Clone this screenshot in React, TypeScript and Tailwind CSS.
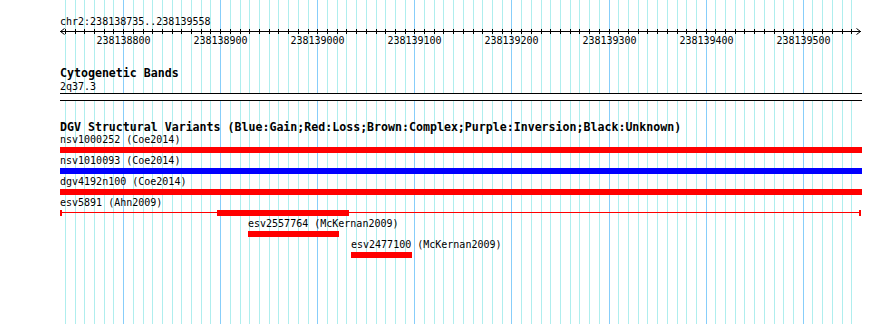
const START = 238138735
const SCALE = 800 / 824

// pixel column of a base position on the page
const px = (bp: number) => Math.round(60 + (bp - START) * SCALE)

const gridTicks: { bp: number; x: number; major: boolean }[] = []
for (let bp = 238138740; bp <= 238139550; bp += 10) {
  gridTicks.push({ bp, x: px(bp), major: bp % 100 === 0 })
}

type Feature = {
  label: string
  x1: number
  x2: number
  color: string
  split?: { x1: number; x2: number }
}

const features: Feature[] = [
  { label: "nsv1000252 (Coe2014)", x1: 60, x2: 862, color: "bg-[#ff0000]" },
  { label: "nsv1010093 (Coe2014)", x1: 60, x2: 862, color: "bg-[#0000ff]" },
  { label: "dgv4192n100 (Coe2014)", x1: 60, x2: 862, color: "bg-[#ff0000]" },
  {
    label: "esv5891 (Ahn2009)",
    x1: 60,
    x2: 862,
    color: "bg-[#ff0000]",
    split: { x1: 217, x2: 349 },
  },
  { label: "esv2557764 (McKernan2009)", x1: 248, x2: 339, color: "bg-[#ff0000]" },
  { label: "esv2477100 (McKernan2009)", x1: 351, x2: 412, color: "bg-[#ff0000]" },
]

const Grid = () => (
  <svg className="absolute inset-0" width={890} height={324} shapeRendering="crispEdges">
    {gridTicks.map((t) => (
      <rect
        key={t.bp}
        x={t.x}
        y={0}
        width={1}
        height={324}
        fill={t.major ? "#87cefa" : "#afeeee"}
      />
    ))}
  </svg>
)

const Ruler = () => (
  <svg width={802} height={18} className="block overflow-visible">
    <rect x={0} y={3} width={801} height={1} fill="#000" shapeRendering="crispEdges" />
    {gridTicks.map((t) => (
      <rect
        key={t.bp}
        x={t.x - 60}
        y={1}
        width={1}
        height={5}
        fill="#000"
        shapeRendering="crispEdges"
      />
    ))}
    <polyline points="4.5,0.5 0.5,3.5 4.5,6.5" fill="none" stroke="#000" strokeWidth={1} />
    <polyline points="796.5,0.5 800.5,3.5 796.5,6.5" fill="none" stroke="#000" strokeWidth={1} />
    {gridTicks
      .filter((t) => t.major)
      .map((t) => (
        <text
          key={t.bp}
          x={t.x - 60 + 0.5}
          y={15.5}
          textAnchor="middle"
          fontSize={10}
          fontFamily="'DejaVu Sans Mono', monospace"
          fill="#000"
        >
          {t.bp}
        </text>
      ))}
  </svg>
)

const FeatureRow = ({ f }: { f: Feature }) => (
  <div className="flex flex-col">
    <div
      className="h-[15px] pt-[1px] leading-[14px] whitespace-pre text-[10px] text-black"
      style={{ marginLeft: f.x1 - 60 }}
    >
      {f.label}
    </div>
    {f.split ? (
      <div className="relative h-[6px] w-[802px]">
        <div className={`absolute left-0 top-[2px] h-px w-[801px] ${f.color}`} />
        <div className={`absolute left-0 top-0 h-[6px] w-[2px] ${f.color}`} />
        <div className={`absolute left-[799px] top-0 h-[6px] w-[2px] ${f.color}`} />
        <div
          className={`absolute top-0 h-[6px] ${f.color}`}
          style={{ left: f.split.x1 - 60, width: f.split.x2 - f.split.x1 }}
        />
      </div>
    ) : (
      <div
        className={`h-[6px] ${f.color}`}
        style={{ marginLeft: f.x1 - 60, width: f.x2 - f.x1 }}
      />
    )}
  </div>
)

const App = () => {
  return (
    <div className="relative w-[890px] h-[324px] overflow-hidden bg-white text-black font-['DejaVu_Sans_Mono',monospace]">
      <Grid />
      <div className="relative flex flex-col pl-[60px] pt-[16px]">
        <div className="h-[12px] leading-[12px] text-[10px]">chr2:238138735..238139558</div>
        <Ruler />

        <div className="mt-[22px] h-[10px] leading-[10px] text-[11.6px] font-bold whitespace-pre">
          Cytogenetic Bands
        </div>
        <div className="mt-[2px] h-[13px] leading-[13px] text-[10px]">2q37.3</div>
        <div className="h-[8px] w-[802px] border-y border-black bg-white" />

        <div className="mt-[21px] h-[10px] leading-[10px] text-[11.6px] font-bold whitespace-pre">
          DGV Structural Variants (Blue:Gain;Red:Loss;Brown:Complex;Purple:Inversion;Black:Unknown)
        </div>
        {features.map((f) => (
          <FeatureRow key={f.label} f={f} />
        ))}
      </div>
    </div>
  )
}

export default App
